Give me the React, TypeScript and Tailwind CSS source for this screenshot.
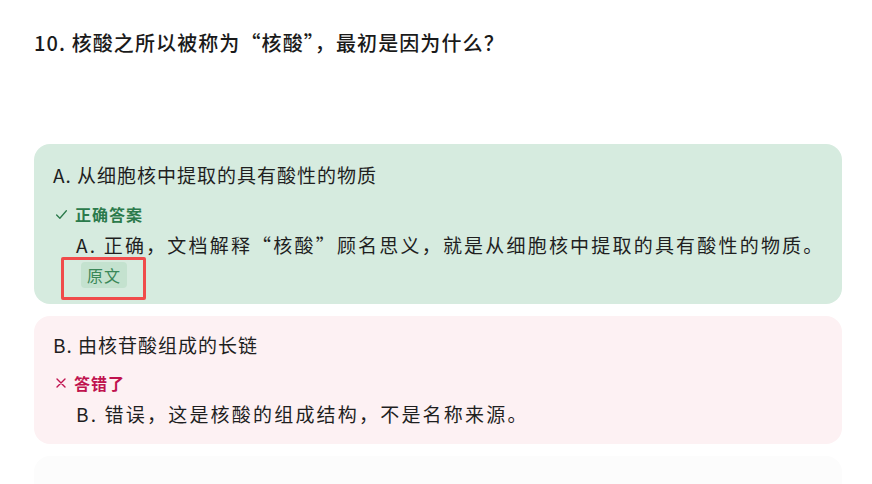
import React from 'react';

const font = { fontFamily: '"Noto Sans CJK SC", "Noto Sans", sans-serif' };

function Check() {
    return (
        <svg viewBox="0 0 12 12" className="w-[13px] h-[13px]" fill="none" stroke="currentColor" strokeWidth={1.2}>
            <path d="M1.5 6.5l3 3 6-7" strokeLinecap="round" strokeLinejoin="round" />
        </svg>
    );
}

function Cross() {
    return (
        <svg viewBox="0 0 12 12" className="w-[12px] h-[12px]" fill="none" stroke="currentColor" strokeWidth={1.4}>
            <path d="M2 2l8 8M10 2l-8 8" strokeLinecap="round" />
        </svg>
    );
}

export default function App() {
    return (
        <div className="w-[872px] h-[484px] overflow-hidden bg-white text-[#1f1f1f]" style={font}>
            <div className="pl-[34px] pt-[28px]">
                <h2 className="text-[20px] leading-[30px] font-medium tracking-[1.1px] text-[#1a1a1a]">
                    10. 核酸之所以被称为“核酸”，最初是因为什么？
                </h2>
            </div>

            <div className="ml-[34px] w-[808px] mt-[86px] flex flex-col gap-[12px]">
                <div className="bg-[#d6ebdf] rounded-[16px] pl-[19px] pr-4 pt-[18px] pb-[16px]">
                    <div className="text-[19px] leading-[26px] tracking-[1px]">A. 从细胞核中提取的具有酸性的物质</div>
                    <div className="mt-[15px] flex items-center gap-[7px] text-[#2b7a4b] text-[16px] leading-[22px] font-bold tracking-[1px]">
                        <span className="pl-[2px]"><Check /></span>
                        <span>正确答案</span>
                    </div>
                    <div className="mt-[6px] pl-[23px] text-[19px] leading-[28px] tracking-[2.2px]">
                        A. 正确，文档解释“核酸”顾名思义，就是从细胞核中提取的具有酸性的物质。
                    </div>
                    <div className="relative mt-[3px] ml-[28px] w-fit">
                        <span className="block bg-[#c4e2cf] text-[#3a8758] rounded-[4px] px-[6px] text-[16px] leading-[26px] tracking-[1px]">原文</span>
                        <div className="absolute left-[-20px] right-[-19px] top-[-5px] bottom-[-12px] border-[3px] border-[#f04b4b] rounded-[2px]"></div>
                    </div>
                </div>

                <div className="bg-[#fdf1f3] rounded-[16px] pl-[19px] pr-4 pt-[16px] pb-[16px]">
                    <div className="text-[19px] leading-[26px] tracking-[1px]">B. 由核苷酸组成的长链</div>
                    <div className="mt-[14px] flex items-center gap-[7px] text-[#c0134f] text-[16px] leading-[22px] font-bold tracking-[1px]">
                        <span className="pl-[2px]"><Cross /></span>
                        <span>答错了</span>
                    </div>
                    <div className="mt-[6px] pl-[23px] text-[19px] leading-[28px] tracking-[2.2px]">
                        B. 错误，这是核酸的组成结构，不是名称来源。
                    </div>
                </div>

                <div className="bg-[#fcfcfc] rounded-[16px] h-[120px]"></div>
            </div>
        </div>
    );
}
